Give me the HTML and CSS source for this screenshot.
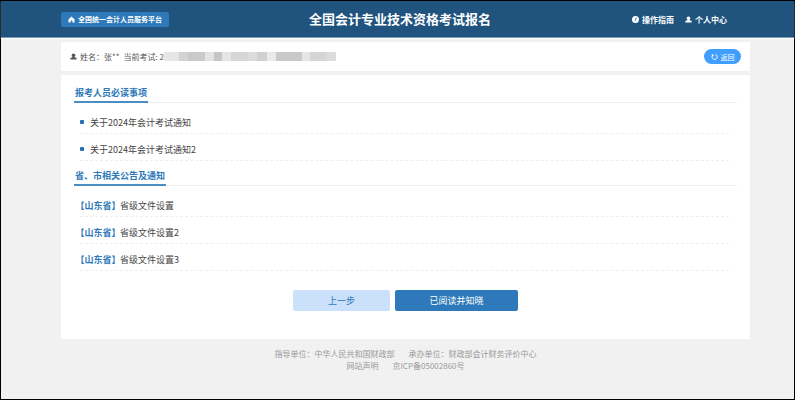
FILE: index.html
```html
<!DOCTYPE html>
<html lang="zh-CN">
<head>
    <meta charset="UTF-8">
    <meta name="viewport" content="width=device-width, initial-scale=1.0">
    <title>全国会计专业技术资格考试报名</title>
    <link rel="stylesheet" href="styles.css">
</head>
<body>
    <div class="page">
        <header class="header">
            <a href="#" class="platform">
                <svg class="icon" viewBox="0 0 16 16"><path d="M8 1 1 8v7h5v-5h4v5h5V8z"/></svg>
                全国统一会计人员服务平台
            </a>
            <h1>全国会计专业技术资格考试报名</h1>
            <nav class="nav">
                <a href="#">
                    <svg class="icon" viewBox="0 0 16 16"><path fill-rule="evenodd" d="M8 0a8 8 0 1 0 0 16A8 8 0 0 0 8 0zM8 4h3L9 8H8zM7 8h2l-2 4H6z"/></svg>
                    操作指南
                </a>
                <a href="#">
                    <svg class="icon" viewBox="0 0 16 16"><circle cx="8" cy="5" r="4"/><path d="M5 8h6v2l4 1v4H1v-4l4-1z"/></svg>
                    个人中心
                </a>
            </nav>
        </header>

        <main class="content">
            <div class="card info">
                <svg class="icon" viewBox="0 0 16 16"><circle cx="8" cy="5" r="4"/><path d="M5 8h6v2l4 1v4H1v-4l4-1z"/></svg>
                <span class="user">姓名：张**</span>
                <span>当前考试: 2</span>
                <span class="mask"></span>
                <button type="button" class="back">
                    <svg class="icon" viewBox="0 0 16 16"><path d="M3 2v4h4M3 6a6 6 0 1 0 7-3" fill="none" stroke="currentColor" stroke-width="2"/></svg>
                    返回
                </button>
            </div>

            <div class="card notices">
                <h2><span>报考人员必读事项</span></h2>
                <ul class="dots">
                    <li><a href="#">关于2024年会计考试通知</a></li>
                    <li><a href="#">关于2024年会计考试通知2</a></li>
                </ul>
                <h2><span>省、市相关公告及通知</span></h2>
                <ul>
                    <li><a href="#"><b>【山东省】</b>省级文件设置</a></li>
                    <li><a href="#"><b>【山东省】</b>省级文件设置2</a></li>
                    <li><a href="#"><b>【山东省】</b>省级文件设置3</a></li>
                </ul>
                <div class="actions">
                    <button type="button" class="prev">上一步</button>
                    <button type="button" class="confirm">已阅读并知晓</button>
                </div>
            </div>

            <footer class="footer">
                <p><span>指导单位：中华人民共和国财政部</span><span>承办单位：财政部会计财务评价中心</span></p>
                <p><a href="#">网站声明</a><a href="#">京ICP备05002860号</a></p>
            </footer>
        </main>
    </div>
</body>
</html>
```
FILE: styles.css
```css
* {
    box-sizing: border-box;
}

body {
    margin: 0;
    padding: 0 1px 1px 0;
    height: 100vh;
    background-color: #fff;
    font-family: "Noto Sans CJK SC", sans-serif;
    font-size: 8px;
    color: #555;
}

a {
    color: inherit;
    text-decoration: none;
}

button {
    padding: 0;
    border: none;
    font-family: inherit;
    cursor: pointer;
}

ul {
    list-style: none;
    margin: 0;
    padding: 4px 8px 0 6px;
}

.page {
    min-height: 100%;
    border: 1px solid #000;
    background-color: #f1f1f1;
}

.icon {
    width: 7px;
    height: 7px;
    flex: none;
    fill: currentColor;
}

/* header */
.header {
    display: grid;
    grid-template-columns: 1fr auto 1fr;
    align-items: center;
    height: 37px;
    padding: 0 55px 0 60px;
    background-color: #20547f;
    border-bottom: 1px solid #7898b4;
    box-shadow: 0 1px 1px #fff;
    color: #fff;
}

.header h1 {
    margin: 0;
    font-size: 13px;
    font-weight: bold;
    line-height: 16px;
}

.platform {
    display: flex;
    align-items: center;
    justify-content: center;
    justify-self: start;
    gap: 3px;
    height: 15px;
    padding: 0 7px;
    border-radius: 2px;
    background-color: #2d79b9;
    font-size: 7px;
    font-weight: bold;
}

.nav {
    display: flex;
    justify-content: flex-end;
    gap: 11px;
    padding-right: 12px;
    font-weight: bold;
}

.nav a {
    display: flex;
    align-items: center;
    gap: 3px;
}

/* content */
.content {
    padding: 4px 44px 0 60px;
}

.card {
    background-color: #fff;
}

.info {
    display: flex;
    align-items: center;
    height: 29px;
    margin-bottom: 4px;
    padding: 0 9px;
}

.user {
    margin: 0 4px 0 3px;
}

.mask {
    width: 172px;
    height: 9px;
    background: linear-gradient(to right,
        #e6e6e6 0 9%, #d3d3d3 9% 14%, #cacaca 14% 24%,
        #e4e4e5 24% 29%, #c6c6c6 29% 34%, #e4e5e5 34% 39%,
        #d6d6d5 39% 49%, #dcdcdd 49% 54%, #d0d0d0 54% 60%,
        #e8ebed 60% 65%, #c9c9c8 65% 80%, #e5e6e8 80% 85%,
        #d5d5d3 85% 95%, #dcdde0 95%);
}

.back {
    display: flex;
    align-items: center;
    justify-content: center;
    gap: 3px;
    width: 37px;
    height: 15px;
    margin-left: auto;
    border-radius: 8px;
    background-color: #409eff;
    color: #fff;
    font-size: 7px;
}

.notices {
    padding: 3px 13px 28px;
}

.notices h2 {
    display: flex;
    height: 25px;
    margin: 0;
    border-bottom: 1px solid #eee;
    color: #2d79b9;
    font-size: 9px;
    font-weight: bold;
    line-height: 29px;
}

.notices h2 span {
    height: 25px;
    padding: 0 1px;
    border-bottom: 2px solid #4b8ec4;
}

.notices li {
    display: flex;
    align-items: center;
    height: 27px;
    padding-top: 4px;
    border-bottom: 1px dashed #eee;
    color: #444;
    font-size: 9px;
}

/* half-width brackets round the province */
.notices li b {
    margin-right: 4px;
    color: #2d79b9;
    font-weight: bold;
    font-feature-settings: "halt";
}

.dots li::before {
    content: "";
    width: 4px;
    height: 4px;
    margin-right: 6px;
    border-radius: 1px;
    background-color: #2470b0;
}

.actions {
    display: flex;
    justify-content: center;
    gap: 5px;
    margin-top: 19px;
}

.actions button {
    height: 21px;
    border-radius: 2px;
    font-size: 9px;
}

.prev {
    width: 97px;
    background-color: #cbe0fb;
    color: #2d79b9;
}

.confirm {
    width: 123px;
    background-color: #2d79b9;
    color: #fff;
}

.footer {
    padding-top: 9px;
    color: #999;
    line-height: 12px;
}

.footer p {
    display: flex;
    justify-content: center;
    gap: 14px;
    margin: 0;
}
```
